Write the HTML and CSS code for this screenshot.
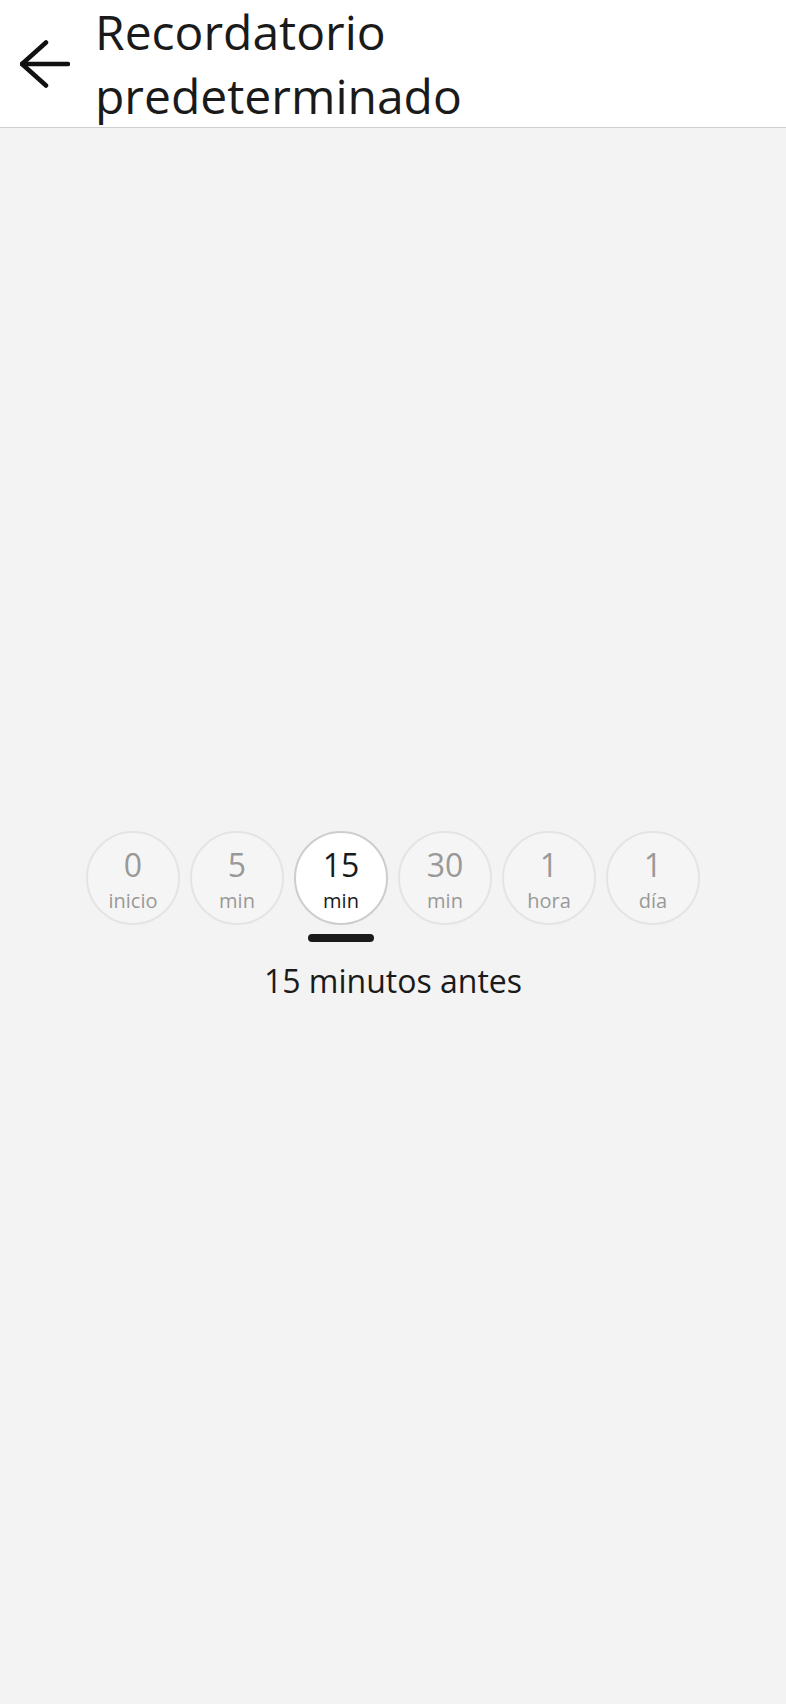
FILE: index.html
```html
<!DOCTYPE html>
<html lang="es">
<head>
<meta charset="utf-8">
<title>Recordatorio predeterminado</title>
<link rel="stylesheet" href="styles.css">
</head>
<body>
<div class="app">
  <header class="header">
    <button class="back" aria-label="Atrás">
      <svg width="50" height="50" viewBox="0 0 50 50" fill="none" stroke="#111" stroke-width="4.5" stroke-linecap="round" stroke-linejoin="round">
        <path d="M26 3.5 L2 25 L26 46.5"/>
        <path d="M2 25 H48"/>
      </svg>
    </button>
    <h1 class="title">Recordatorio<br>predeterminado</h1>
  </header>
  <main class="content">
    <div class="picker">
      <div class="options">
        <div class="opt"><span class="num">0</span><span class="unit">inicio</span></div>
        <div class="opt"><span class="num">5</span><span class="unit">min</span></div>
        <div class="opt active"><span class="num">15</span><span class="unit">min</span></div>
        <div class="opt"><span class="num">30</span><span class="unit">min</span></div>
        <div class="opt"><span class="num">1</span><span class="unit">hora</span></div>
        <div class="opt"><span class="num">1</span><span class="unit">día</span></div>
      </div>
      <div class="indicator-row">
        <span class="slot"></span><span class="slot"></span><span class="slot on"><span class="bar"></span></span><span class="slot"></span><span class="slot"></span><span class="slot"></span>
      </div>
      <p class="summary">15 minutos antes</p>
    </div>
  </main>
</div>
</body>
</html>
```

FILE: styles.css
```css
* { box-sizing: border-box; }
html, body {
  margin: 0;
  padding: 0;
  height: 100%;
}
body {
  background: #f3f3f3;
  font-family: "Open Sans", "Noto Sans", sans-serif;
  color: #1a1a1a;
}
.app {
  min-height: 1704px;
  display: flex;
  flex-direction: column;
}
.header {
  background: #ffffff;
  height: 128px;
  border-bottom: 1px solid #cfcfd3;
  display: flex;
  align-items: flex-start;
  padding-left: 20px;
}
.back {
  border: 0;
  background: none;
  padding: 0;
  margin-top: 39px;
  width: 50px;
  height: 50px;
  display: block;
  flex: none;
}
.back svg { display: block; }
.title {
  margin: 0 0 0 25px;
  font-size: 48px;
  font-weight: 400;
  line-height: 64px;
  color: #1a1a1a;
  letter-spacing: 0;
}
.content {
  flex: 1;
  display: flex;
  align-items: center;
  justify-content: center;
}
.picker {
  display: flex;
  flex-direction: column;
  align-items: center;
  margin-top: 1px;
}
.options {
  display: flex;
  gap: 10px;
}
.opt {
  width: 94px;
  height: 94px;
  border-radius: 50%;
  border: 2px solid #e4e4e4;
  background: #f5f5f5;
  display: flex;
  flex-direction: column;
  align-items: center;
  justify-content: center;
  padding-top: 3px;
  color: #999999;
}
.opt.active {
  background: #ffffff;
  border-color: #cdcdcd;
  color: #1a1a1a;
}
.num {
  font-size: 32px;
  line-height: 43px;
}
.unit {
  font-size: 20px;
  line-height: 30px;
}
.indicator-row {
  display: flex;
  gap: 10px;
  margin-top: 9px;
  height: 8px;
}
.slot {
  width: 94px;
  display: flex;
  justify-content: center;
}
.bar {
  width: 66px;
  height: 8px;
  border-radius: 4px;
  background: #1a1a1a;
}
.summary {
  margin: 17px 0 0;
  font-size: 32px;
  line-height: 44px;
  color: #1a1a1a;
}
```
